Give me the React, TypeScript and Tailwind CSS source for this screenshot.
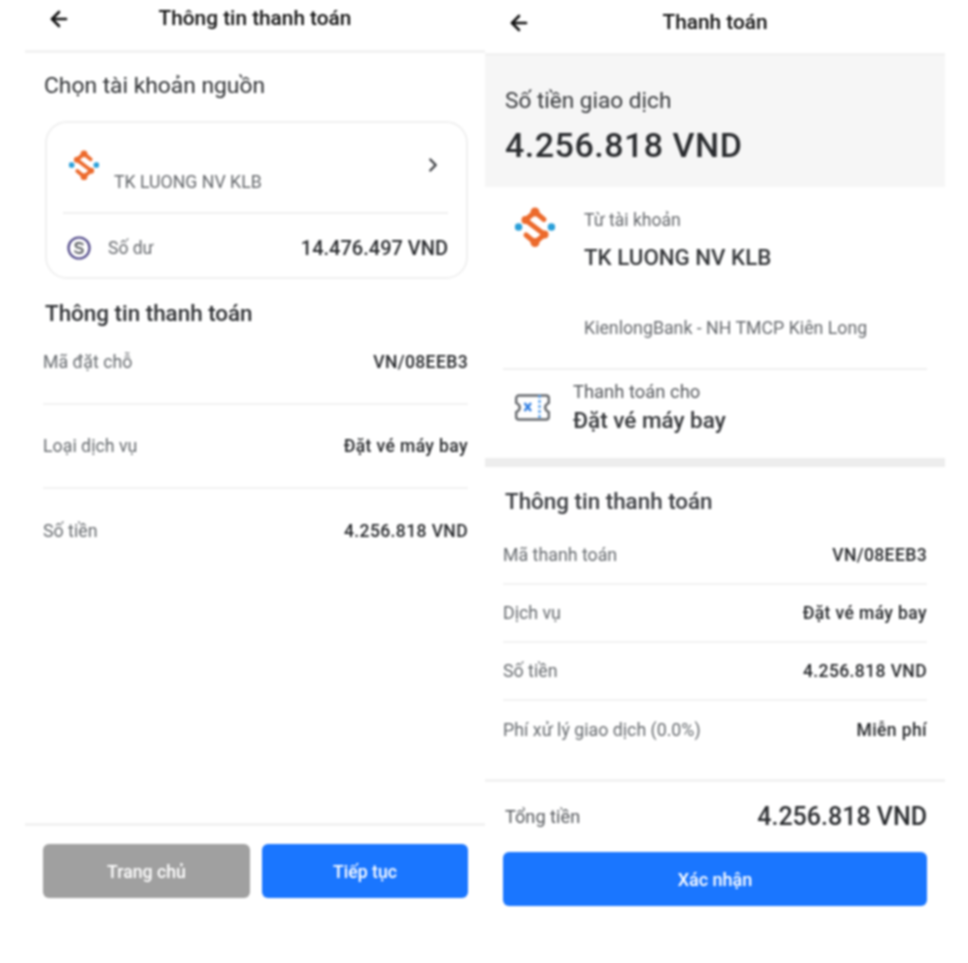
import { ArrowLeft, ChevronRight } from 'lucide-react'

function BankLogo({ size }: { size: number }) {
  return (
    <svg width={size} height={size} viewBox="0 0 40 40" fill="none">
      <circle cx="3.500" cy="20" r="3.800" fill="#2a9fd8" />
      <circle cx="36.500" cy="20" r="3.800" fill="#2a9fd8" />
      <path
        d="M29 12.500 L20 5 L10.500 13 L29.500 27.500 L20 35.500 L11 28"
        stroke="#ec6a2c"
        strokeWidth="5"
        strokeLinejoin="round"
        strokeLinecap="round"
      />
      <circle cx="20" cy="5" r="4.500" fill="#ec6a2c" />
      <circle cx="20" cy="35.500" r="4.500" fill="#ec6a2c" />
      <circle cx="10.500" cy="13" r="4" fill="#ec6a2c" />
      <circle cx="29.500" cy="27.500" r="4" fill="#ec6a2c" />
    </svg>
  )
}

function CoinIcon() {
  return (
    <svg width="24" height="24" viewBox="0 0 24 24" fill="none">
      <circle cx="12" cy="12" r="10.500" stroke="#4f4788" strokeWidth="2.200" />
      <path
        d="M15.800 8.300C14.900 7.300 13.600 7 12 7c-2 0-3.500.9-3.500 2.400 0 3.300 7.300 1.700 7.300 5 0 1.700-1.700 2.600-3.800 2.600-1.700 0-3.100-.5-4-1.700"
        stroke="#55585c"
        strokeWidth="1.800"
        strokeLinecap="round"
      />
    </svg>
  )
}

function TicketIcon() {
  return (
    <svg width="37" height="29" viewBox="0 0 37 29" fill="none">
      <path
        d="M5 2.500h27c1.600 0 2.800 1.100 2.800 2.800v4.700c-2.600 1-3.600 2.600-3.600 4.500s1 3.500 3.600 4.500v4.700c0 1.700-1.200 2.800-2.800 2.800H5c-1.600 0-2.800-1.100-2.800-2.800V19c2.600-1 3.600-2.600 3.600-4.500s-1-3.500-3.600-4.500V5.300C2.200 3.600 3.400 2.500 5 2.500z"
        stroke="#66696d"
        strokeWidth="2.400"
      />
      <path d="M10.500 10l6.500 8M17 10l-6.500 8" stroke="#2f7de1" strokeWidth="2.400" />
      <path d="M25.500 2v25" stroke="#5aa2ee" strokeWidth="2.400" strokeDasharray="3 2" />
    </svg>
  )
}

function InfoRow({ label, value, height }: { label: string; value: string; height: string }) {
  return (
    <div className={`flex justify-between items-center border-b-2 border-[#f2f2f2] last:border-b-0 ${height}`}>
      <span className="text-[17.8px] text-[#666a6e]">{label}</span>
      <span className="text-[17.5px] text-[#26282b] font-medium tracking-[0.4px]">{value}</span>
    </div>
  )
}

function Header({ title, height }: { title: string; height: string }) {
  return (
    <div className={`flex items-center justify-between px-[22px] border-b-[3px] border-[#f2f2f2] ${height}`}>
      <ArrowLeft size={24} strokeWidth={2.600} className="text-[#111] mb-[8px]" />
      <span className="text-[20.800px] font-medium text-[#111] mb-[8px]">{title}</span>
      <span className="w-[24px]" />
    </div>
  )
}

export default function App() {
  return (
    <div className="flex w-[968px] h-[963px] bg-white pl-[25px] font-['Roboto',sans-serif] blur-[0.9px]">
      {/* Thông tin thanh toán */}
      <div className="flex flex-col w-[460px]">
        <Header title="Thông tin thanh toán" height="h-[53px] pb-[4px]" />
        <div className="flex-1 pl-[19px] pr-[17px]">
          <div className="text-[22.800px] text-[#2e3033] leading-[28px] mt-[19px]">Chọn tài khoản nguồn</div>

          <div className="mt-[21px] ml-px h-[158px] rounded-[22px] border-2 border-[#f0f0f0] pl-[16px] pr-[18px]">
            <div className="flex h-[91px] border-b-2 border-[#efefef]">
              <div className="ml-[6px] mt-[27px]">
                <BankLogo size={30} />
              </div>
              <div className="flex-1 pl-[15px] pt-[49px] text-[17.700px] leading-[20px] text-[#65686c]">TK LUONG NV KLB</div>
              <ChevronRight size={22} strokeWidth={2.500} className="text-[#3a3c40] mt-[31px] mr-[4px]" />
            </div>
            <div className="flex items-center h-[64px] pt-[4px]">
              <div className="ml-[4px]">
                <CoinIcon />
              </div>
              <span className="ml-[17px] flex-1 text-[17.500px] text-[#66696d]">Số dư</span>
              <span className="text-[20px] font-medium text-[#2a2c2f]">14.476.497 VND</span>
            </div>
          </div>

          <div className="text-[22.400px] text-[#2e3033] font-medium leading-[28px] mt-[20px] ml-px">Thông tin thanh toán</div>

          <div className="-mt-[6px] -ml-px">
            <InfoRow label="Mã đặt chỗ" value="VN/08EEB3" height="h-[84px]" />
            <InfoRow label="Loại dịch vụ" value="Đặt vé máy bay" height="h-[84px]" />
            <InfoRow label="Số tiền" value="4.256.818 VND" height="h-[84px]" />
          </div>
        </div>

        <div className="flex gap-[12px] h-[140px] border-t-[3px] border-[#f2f2f2] pl-[18px] pr-[17px] pt-[18px]">
          <button className="w-[207px] h-[54px] pt-[2px] rounded-[6px] bg-[#a0a0a0] text-white text-[17.700px] font-medium">Trang chủ</button>
          <button className="w-[206px] h-[54px] pt-[2px] rounded-[6px] bg-[#1a76ff] text-white text-[17.700px] font-medium">Tiếp tục</button>
        </div>
      </div>

      {/* Thanh toán */}
      <div className="flex flex-col w-[460px]">
        <Header title="Thanh toán" height="h-[56px]" />

        <div className="h-[131px] bg-[#f6f6f6] pl-[20px] pt-[31px]">
          <div className="text-[22.600px] leading-[28px] text-[#35373a]">Số tiền giao dịch</div>
          <div className="text-[34px] leading-[40px] mt-[10px] font-medium text-[#2a2c2f] tracking-[0.5px]">4.256.818 VND</div>
        </div>

        <div className="mx-[18px] h-[183px] flex border-b-2 border-[#f0f0f0]">
          <div className="ml-[12px] mt-[20px]">
            <BankLogo size={40} />
          </div>
          <div className="ml-[29px] pt-[23px]">
            <div className="text-[17.600px] leading-[20px] text-[#66696d]">Từ tài khoản</div>
            <div className="text-[22.300px] leading-[26px] mt-[14px] font-medium text-[#35373a]">TK LUONG NV KLB</div>
            <div className="text-[17.750px] leading-[20px] mt-[48px] text-[#66696d]">KienlongBank - NH TMCP Kiên Long</div>
          </div>
        </div>

        <div className="mx-[18px] h-[88px] flex">
          <div className="mt-[23px] ml-[11px]">
            <TicketIcon />
          </div>
          <div className="ml-[22px] pt-[10px]">
            <div className="text-[18.400px] leading-[24px] text-[#55585c]">Thanh toán cho</div>
            <div className="text-[22.500px] leading-[28px] mt-[2px] font-medium text-[#35373a]">Đặt vé máy bay</div>
          </div>
        </div>

        <div className="h-[9px] bg-[#ededed]" />

        <div className="px-[18px] border-b-[3px] border-[#f2f2f2] h-[315px]">
          <div className="text-[22.400px] leading-[28px] mt-[20px] ml-[2px] font-medium text-[#3a3c40]">Thông tin thanh toán</div>
          <div className="mt-[12px]">
            <InfoRow label="Mã thanh toán" value="VN/08EEB3" height="h-[58px]" />
            <InfoRow label="Dịch vụ" value="Đặt vé máy bay" height="h-[58px]" />
            <InfoRow label="Số tiền" value="4.256.818 VND" height="h-[58px]" />
            <InfoRow label="Phí xử lý giao dịch (0.0%)" value="Miễn phí" height="h-[58px]" />
          </div>
        </div>

        <div className="flex items-center justify-between h-[70px] pl-[20px] pr-[18px]">
          <span className="text-[18.200px] text-[#55585c]">Tổng tiền</span>
          <span className="text-[25px] font-medium text-[#2a2c2f]">4.256.818 VND</span>
        </div>

        <button className="mx-[18px] h-[54px] rounded-[6px] bg-[#1a76ff] text-white text-[18px] font-medium">Xác nhận</button>
      </div>
    </div>
  )
}
